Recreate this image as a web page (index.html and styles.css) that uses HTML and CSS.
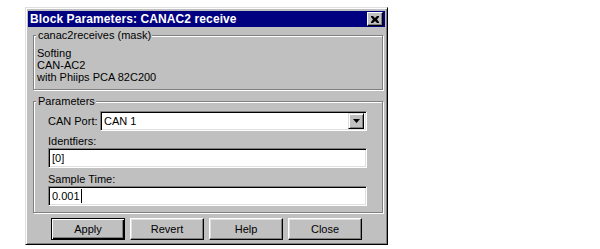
FILE: index.html
```html
<!DOCTYPE html>
<html lang="en">
<head>
  <meta charset="UTF-8" />
  <title>Block Parameters: CANAC2 receive</title>
  <link rel="stylesheet" href="styles.css">
</head>
<body>
  <div class="dialog">
    <div class="titlebar">
      <span class="title">Block Parameters: CANAC2 receive</span>
      <span class="close-btn">
        <svg width="8" height="7" viewBox="0 0 8 7">
          <path d="M0 0h2l2 2 2-2h2v1l-2 2.5 2 2.5v1h-2l-2-2-2 2h-2v-1l2-2.5-2-2.5z" fill="#000"/>
        </svg>
      </span>
    </div>

    <fieldset class="group mask">
      <legend>canac2receives (mask)</legend>
      <div class="group-body">
        <p class="mask-text">Softing<br>CAN-AC2<br>with Phiips PCA 82C200</p>
      </div>
    </fieldset>

    <fieldset class="group params">
      <legend>Parameters</legend>
      <div class="group-body">
        <div class="port-row">
          <span class="label-inline">CAN Port:</span>
          <div class="combo">
            <span class="combo-text">CAN 1</span>
            <span class="combo-drop">
              <svg width="7" height="4" viewBox="0 0 7 4"><path d="M0 0h7l-3.5 4z" fill="#000"/></svg>
            </span>
          </div>
        </div>

        <div class="field-label first">Identfiers:</div>
        <div class="edit">[0]</div>

        <div class="field-label">Sample Time:</div>
        <div class="edit">0.001<span class="caret"></span></div>
      </div>
    </fieldset>

    <div class="buttons">
      <span class="btn default">Apply</span>
      <span class="btn">Revert</span>
      <span class="btn">Help</span>
      <span class="btn">Close</span>
    </div>
  </div>
</body>
</html>
```

FILE: styles.css
```css
* {
  box-sizing: border-box;
}

body {
  margin: 0;
  background: #fff;
  font-family: 'Liberation Sans', Arial, sans-serif;
  font-size: 11px;
  color: #000;
}

.dialog {
  width: 363px;
  height: 238px;
  margin: 7px 0 0 25px;
  background: #c0c0c0;
  border: 1px solid;
  border-color: #dfdfdf #000 #000 #dfdfdf;
  box-shadow: inset 1px 1px #fff, inset -1px -1px #808080;
  padding: 3px 2px 2px 2px;
  display: flex;
  flex-direction: column;
}

.titlebar {
  height: 16px;
  background: #000080;
  color: #fff;
  display: flex;
  align-items: center;
  justify-content: space-between;
  padding: 0 2px 0 2px;
}

.title {
  font-weight: bold;
  font-size: 12px;
  letter-spacing: 0.1px;
}

.close-btn {
  width: 16px;
  height: 14px;
  background: #c0c0c0;
  border: 1px solid;
  border-color: #fff #000 #000 #fff;
  box-shadow: inset -1px -1px #808080;
  display: flex;
  align-items: center;
  justify-content: center;
}

.group {
  margin: 2px 2px 0 5px;
  padding: 0;
  border: 1px solid #808080;
  box-shadow: inset 1px 1px #fff, 1px 1px #fff;
  min-width: 0;
}

.group legend {
  margin-left: 2px;
  padding: 0 1px 0 2px;
  line-height: 13px;
  background: #c0c0c0;
}

.group-body {
  padding: 5px 10px 6px 3px;
}

.mask-text {
  margin: 0;
  line-height: 12px;
}

.params {
  margin-top: 5px;
}

.params .group-body {
  padding: 3px 15px 6px 14px;
}

.port-row {
  display: flex;
  align-items: center;
  gap: 3px;
}

.label-inline {
  width: 49px;
  white-space: nowrap;
}

.combo {
  flex: 1;
  height: 20px;
  background: #fff;
  border: 1px solid;
  border-color: #808080 #fff #fff #808080;
  box-shadow: inset 1px 1px #000, inset -1px -1px #dfdfdf;
  display: flex;
  align-items: center;
  justify-content: space-between;
  padding: 2px;
}

.combo-text {
  padding-left: 1px;
}

.combo-drop {
  width: 16px;
  height: 16px;
  background: #c0c0c0;
  border: 1px solid;
  border-color: #dfdfdf #000 #000 #dfdfdf;
  box-shadow: inset 1px 1px #fff, inset -1px -1px #808080;
  display: flex;
  align-items: center;
  justify-content: center;
}

.field-label {
  margin-top: 4px;
  line-height: 14px;
}

.field-label.first {
  margin-top: 3px;
}

.edit {
  height: 20px;
  background: #fff;
  border: 1px solid;
  border-color: #808080 #fff #fff #808080;
  box-shadow: inset 1px 1px #000, inset -1px -1px #dfdfdf;
  padding: 0 3px;
  display: flex;
  align-items: center;
}

.caret {
  display: inline-block;
  width: 1px;
  height: 14px;
  background: #000;
  margin-left: 1px;
}

.buttons {
  display: flex;
  justify-content: center;
  gap: 5px;
  margin-top: 5px;
}

.btn {
  width: 74px;
  height: 22px;
  background: #c0c0c0;
  border: 1px solid;
  border-color: #fff #000 #000 #fff;
  box-shadow: inset -1px -1px #808080, inset 1px 1px #dfdfdf;
  display: flex;
  align-items: center;
  justify-content: center;
}

.btn.default {
  border: 1px solid #000;
  box-shadow: inset 1px 1px #fff, inset -1px -1px #000, inset -2px -2px #808080;
}
```
